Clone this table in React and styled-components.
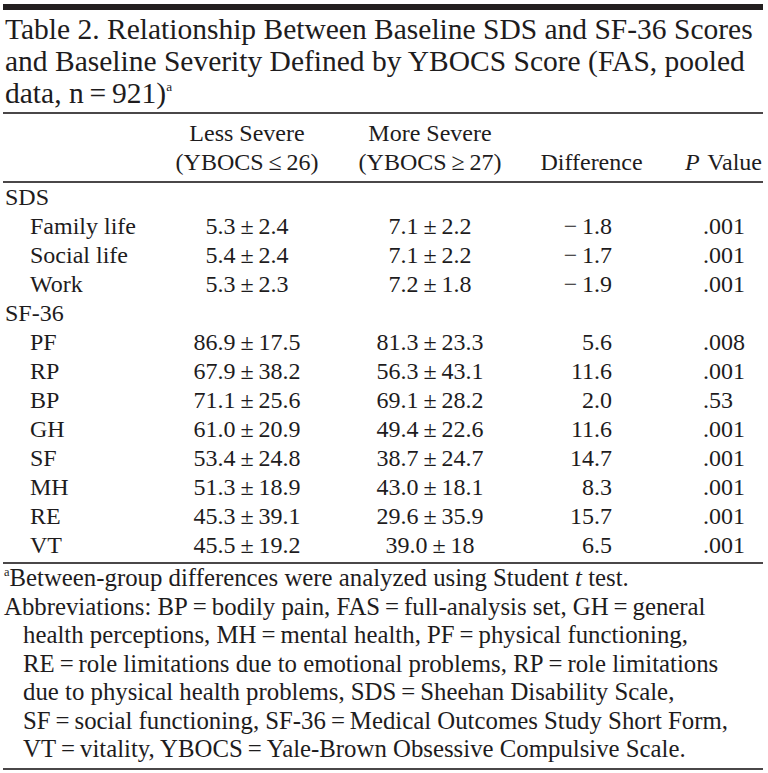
import React from "react";
import styled, { createGlobalStyle } from "styled-components";

const GlobalStyle = createGlobalStyle`
  body {
    margin: 0;
    background: #ffffff;
    color: #1e1c1d;
    font-family: "Liberation Serif", "Times New Roman", serif;
  }
`;

const Page = styled.div`
  width: 760px;
  padding: 4px 5px 0 3px;
`;

const TopBar = styled.div`
  height: 6px;
  background: #231f20;
`;

const Title = styled.h1`
  margin: 0;
  padding: 3px 0 3px 2px;
  font-size: 29.5px;
  font-weight: normal;
  line-height: 32px;
  white-space: nowrap;
  border-bottom: 2px solid #4a4748;
`;

const Sup = styled.sup`
  font-size: 0.45em;
  vertical-align: 0.9em;
  line-height: 0;
`;

const Grid = styled.div`
  display: grid;
  grid-template-columns: 154px 180px 186px 137px 103px;
  font-size: 24px;
  line-height: 29px;
`;

const Head = styled(Grid)`
  padding: 5px 0 4px;
  border-bottom: 2px solid #4a4748;
`;

const Body = styled.div`
  padding: 0 0 2px;
  border-bottom: 2px solid #4a4748;
`;

const Cell = styled.div`
  white-space: nowrap;
  text-align: ${(p) => p.$align || "left"};
  padding-left: ${(p) => p.$pl || 0}px;
  padding-right: ${(p) => p.$pr || 0}px;
  word-spacing: ${(p) => p.$ws || 0}px;
`;

const Label = styled(Cell)`
  padding-left: ${(p) => (p.$sub ? 27 : 2)}px;
`;

const Notes = styled.div`
  padding: 0 0 4px 1px;
  font-size: 24.8px;
  line-height: 28.5px;
  border-bottom: 2px solid #4a4748;
`;

const NoteLine = styled.div`
  white-space: nowrap;
  padding-left: ${(p) => (p.$indent ? 19 : 0)}px;
`;

const NoteSup = styled.sup`
  font-size: 0.5em;
  vertical-align: 0.8em;
  line-height: 0;
`;

const pm = "\u2009±\u2009";
const eq = "\u2009=\u2009";
const neg = (v) => "−\u2009" + v;

const rows = [
  { group: "SDS" },
  { label: "Family life", a: "5.3" + pm + "2.4", b: "7.1" + pm + "2.2", d: neg("1.8"), p: ".001" },
  { label: "Social life", a: "5.4" + pm + "2.4", b: "7.1" + pm + "2.2", d: neg("1.7"), p: ".001" },
  { label: "Work", a: "5.3" + pm + "2.3", b: "7.2" + pm + "1.8", d: neg("1.9"), p: ".001" },
  { group: "SF-36" },
  { label: "PF", a: "86.9" + pm + "17.5", b: "81.3" + pm + "23.3", d: "5.6", p: ".008" },
  { label: "RP", a: "67.9" + pm + "38.2", b: "56.3" + pm + "43.1", d: "11.6", p: ".001" },
  { label: "BP", a: "71.1" + pm + "25.6", b: "69.1" + pm + "28.2", d: "2.0", p: ".53" },
  { label: "GH", a: "61.0" + pm + "20.9", b: "49.4" + pm + "22.6", d: "11.6", p: ".001" },
  { label: "SF", a: "53.4" + pm + "24.8", b: "38.7" + pm + "24.7", d: "14.7", p: ".001" },
  { label: "MH", a: "51.3" + pm + "18.9", b: "43.0" + pm + "18.1", d: "8.3", p: ".001" },
  { label: "RE", a: "45.3" + pm + "39.1", b: "29.6" + pm + "35.9", d: "15.7", p: ".001" },
  { label: "VT", a: "45.5" + pm + "19.2", b: "39.0" + pm + "18", d: "6.5", p: ".001" },
];

export default function App() {
  return (
    <Page>
      <GlobalStyle />
      <TopBar />
      <Title>
        Table 2. Relationship Between Baseline SDS and SF-36 Scores
        <br />
        and Baseline Severity Defined by YBOCS Score (FAS, pooled
        <br />
        data, n{eq}921)<Sup>a</Sup>
      </Title>
      <Head>
        <Cell />
        <Cell $align="center">
          Less Severe
          <br />
          (YBOCS{"\u2009≤\u2009"}26)
        </Cell>
        <Cell $align="center">
          More Severe
          <br />
          (YBOCS{"\u2009≥\u2009"}27)
        </Cell>
        <Cell $align="center">
          <br />
          Difference
        </Cell>
        <Cell $align="right" $pr={1} $ws={2}>
          <br />
          <i>P</i> Value
        </Cell>
      </Head>
      <Body>
        {rows.map((r, i) =>
          r.group ? (
            <Grid key={i}>
              <Label>{r.group}</Label>
            </Grid>
          ) : (
            <Grid key={i}>
              <Label $sub>{r.label}</Label>
              <Cell $align="center">{r.a}</Cell>
              <Cell $align="center">{r.b}</Cell>
              <Cell $align="right" $pr={48}>{r.d}</Cell>
              <Cell $pl={43}>{r.p}</Cell>
            </Grid>
          )
        )}
      </Body>
      <Notes>
        <NoteLine>
          <NoteSup>a</NoteSup>Between-group differences were analyzed using Student <i>t</i> test.
        </NoteLine>
        <NoteLine>
          Abbreviations: BP{eq}bodily pain, FAS{eq}full-analysis set, GH{eq}general
        </NoteLine>
        <NoteLine $indent>
          health perceptions, MH{eq}mental health, PF{eq}physical functioning,
        </NoteLine>
        <NoteLine $indent>
          RE{eq}role limitations due to emotional problems, RP{eq}role limitations
        </NoteLine>
        <NoteLine $indent>
          due to physical health problems, SDS{eq}Sheehan Disability Scale,
        </NoteLine>
        <NoteLine $indent>
          SF{eq}social functioning, SF-36{eq}Medical Outcomes Study Short Form,
        </NoteLine>
        <NoteLine $indent>
          VT{eq}vitality, YBOCS{eq}Yale-Brown Obsessive Compulsive Scale.
        </NoteLine>
      </Notes>
    </Page>
  );
}
